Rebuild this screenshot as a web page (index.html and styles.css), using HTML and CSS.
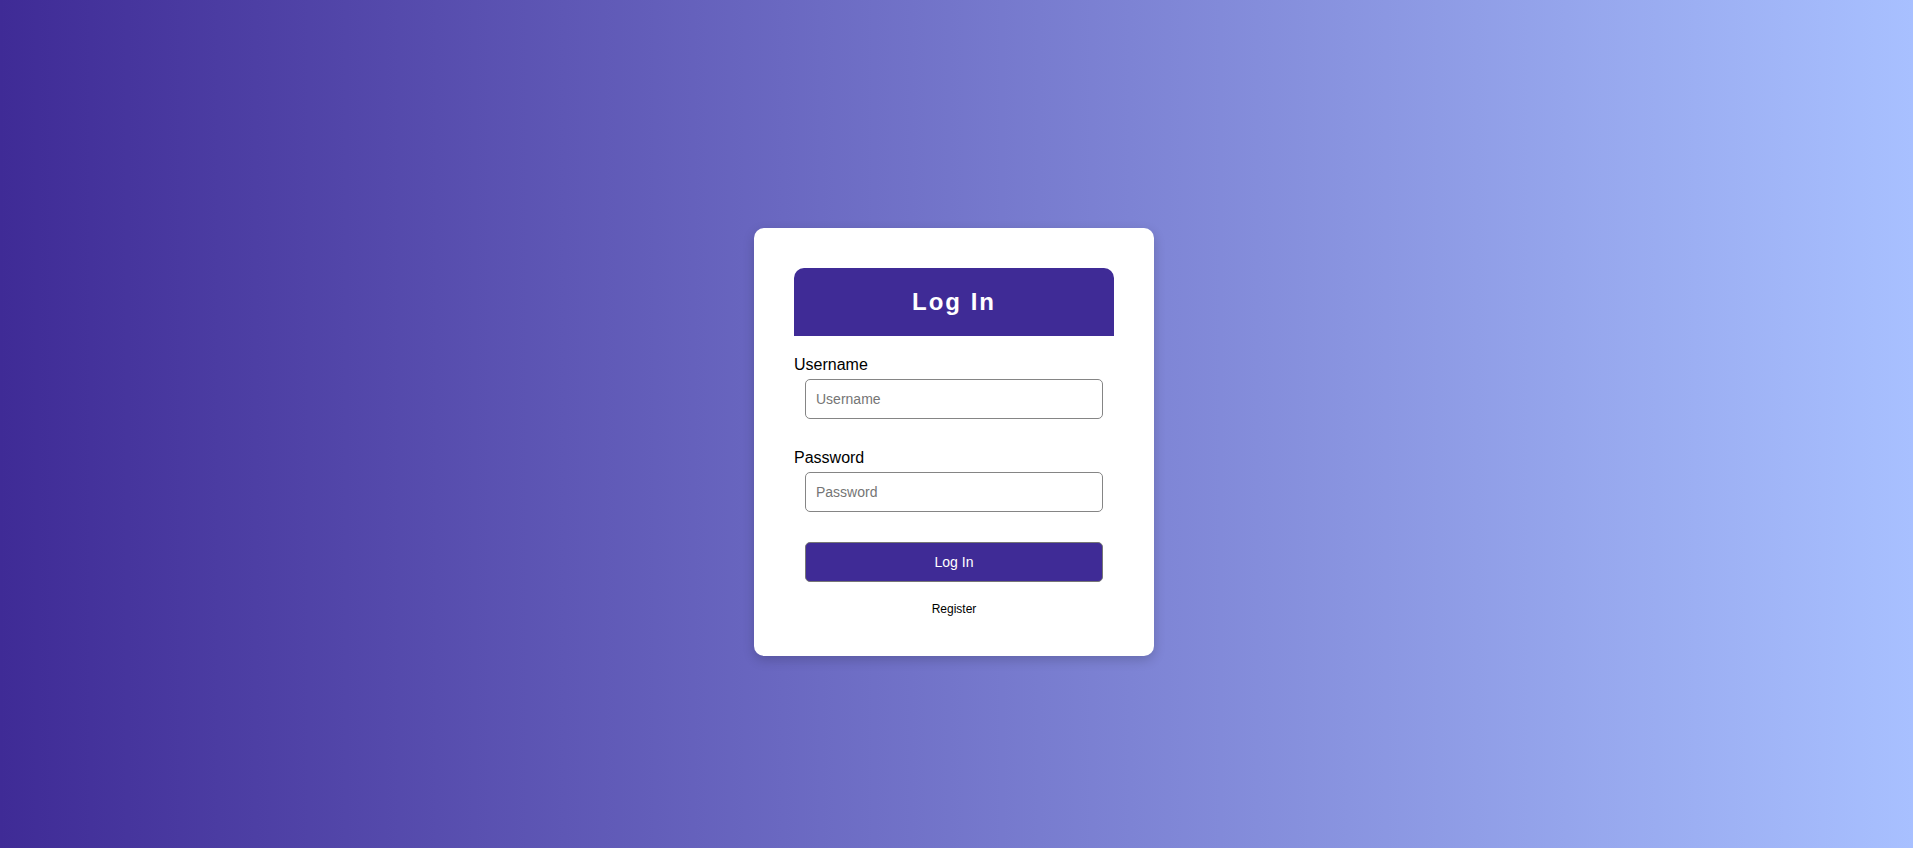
FILE: index.html
```html
<!DOCTYPE html>
<html lang="en">
<head>
<meta charset="utf-8">
<title>Log In</title>
<link rel="stylesheet" href="styles.css">
</head>
<body>
<main class="page">
  <form class="card" onsubmit="return false;">
    <h1 class="card-title">Log In</h1>
    <label class="field-label" for="username">Username</label>
    <input class="field-input" id="username" type="text" placeholder="Username">
    <label class="field-label field-label--second" for="password">Password</label>
    <input class="field-input" id="password" type="password" placeholder="Password">
    <button class="submit" type="submit">Log In</button>
    <a class="register" href="#">Register</a>
  </form>
</main>
</body>
</html>
```
FILE: styles.css
```css
* { box-sizing: border-box; }
html, body { margin: 0; padding: 0; }
body {
  font-family: "Liberation Sans", Arial, sans-serif;
  background: linear-gradient(to right, #3f2b96, #a8c0ff);
  min-height: 100vh;
}
.page {
  display: flex;
  justify-content: center;
  align-items: flex-start;
  padding: 228px 5px 0 0;
  min-height: 100vh;
}
.card {
  width: 400px;
  background: #fff;
  border-radius: 10px;
  padding: 40px;
  display: flex;
  flex-direction: column;
  box-shadow: 0 4px 12px rgba(0, 0, 0, 0.18);
}
.card-title {
  margin: 0;
  background: #3f2b96;
  color: #fff;
  font-size: 24px;
  font-weight: bold;
  letter-spacing: 2px;
  text-align: center;
  padding: 20px 0;
  border-radius: 10px 10px 0 0;
}
.field-label {
  margin-top: 20px;
  font-size: 16px;
  color: #000;
}
.field-label--second { margin-top: 30px; }
.field-input {
  margin: 5px 11px 0;
  height: 40px;
  border: 1px solid #858585;
  border-radius: 5px;
  padding: 0 10px;
  font-family: "Liberation Sans", Arial, sans-serif;
  font-size: 14px;
  color: #000;
}
.field-input::placeholder { color: #757575; }
.submit {
  margin: 30px 11px 0;
  height: 40px;
  background: #3f2b96;
  color: #fff;
  border: 1px solid #767676;
  border-radius: 5px;
  font-family: "Liberation Sans", Arial, sans-serif;
  font-size: 14px;
}
.register {
  margin-top: 20px;
  align-self: center;
  font-size: 12px;
  color: #000;
  text-decoration: none;
}
```
